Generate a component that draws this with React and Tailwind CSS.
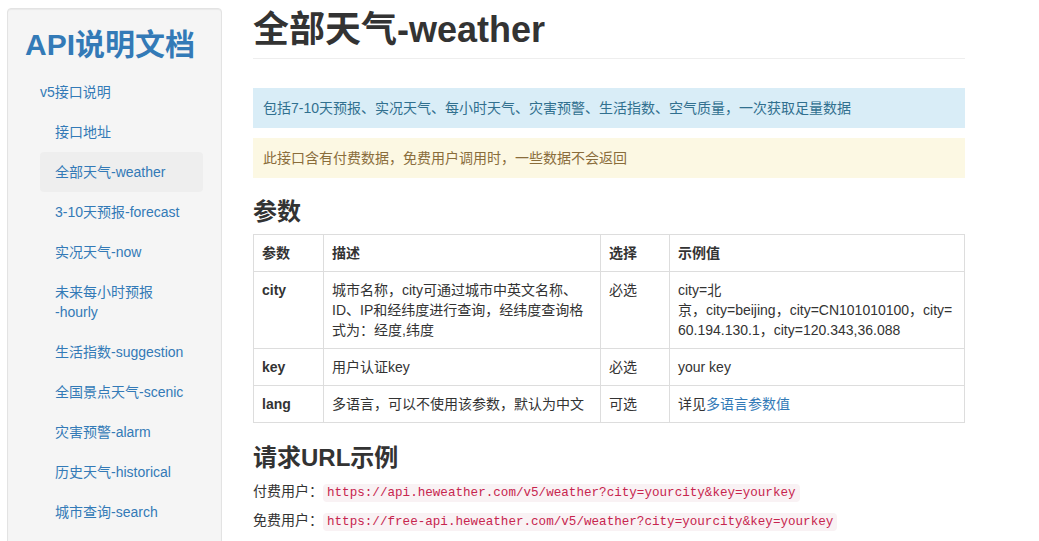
import React from "react";

const navItems = [
  { label: "接口地址" },
  { label: "全部天气-weather", active: true },
  { label: "3-10天预报-forecast" },
  { label: "实况天气-now" },
  {
    label: (
      <>
        未来每小时预报
        <br />
        -hourly
      </>
    ),
  },
  { label: "生活指数-suggestion" },
  { label: "全国景点天气-scenic" },
  { label: "灾害预警-alarm" },
  { label: "历史天气-historical" },
  { label: "城市查询-search" },
];

const sans = "font-['Liberation_Sans','Noto_Sans_CJK_SC',sans-serif]";

function Sidebar() {
  return (
    <aside className="w-[215px] shrink-0 mt-2 bg-[#f5f5f5] border border-[#e3e3e3] rounded pt-[19px] pl-[17px] pr-[18px] pb-10 shadow-[inset_0_1px_1px_rgba(0,0,0,0.05)]">
      <h1 className="text-[30px] leading-[33px] font-bold text-[#337ab7] mb-[11px]">
        API说明文档
      </h1>
      <ul>
        <li>
          <a className="block px-[15px] py-[10px] text-sm leading-5 text-[#337ab7]">
            v5接口说明
          </a>
          <ul className="pl-[15px]">
            {navItems.map((item, i) => (
              <li key={i}>
                <a
                  className={
                    "block px-[15px] py-[10px] text-sm leading-5 text-[#337ab7] rounded-sm " +
                    (item.active ? "bg-[#eeeeee]" : "")
                  }
                >
                  {item.label}
                </a>
              </li>
            ))}
          </ul>
        </li>
      </ul>
    </aside>
  );
}

function Cell({ children, bold, head }) {
  return (
    <td
      className={
        "border border-[#dddddd] px-2 py-2 align-top text-sm leading-5 " +
        (bold || head ? "font-bold" : "")
      }
    >
      {children}
    </td>
  );
}

export default function App() {
  return (
    <div className={`${sans} text-[#333333] bg-white min-h-screen flex pl-[7px]`}>
      <Sidebar />
      <main className="w-[712px] ml-[31px] pt-[10px]">
        <div className="border-b border-[#eeeeee] pb-2">
          <h1 className="text-[36px] leading-10 font-bold">全部天气-weather</h1>
        </div>

        <div className="mt-[29px] bg-[#d9edf7] text-[#31708f] text-sm leading-5 px-[10px] py-[10px]">
          包括7-10天预报、实况天气、每小时天气、灾害预警、生活指数、空气质量，一次获取足量数据
        </div>
        <div className="mt-[10px] bg-[#fcf8e3] text-[#8a6d3b] text-sm leading-5 px-[10px] py-[10px]">
          此接口含有付费数据，免费用户调用时，一些数据不会返回
        </div>

        <h2 className="mt-[21px] text-2xl leading-[26px] font-bold">参数</h2>
        <table className="mt-[9px] w-full border-collapse border border-[#dddddd]">
          <colgroup>
            <col className="w-[70px]" />
            <col className="w-[277px]" />
            <col className="w-[69px]" />
            <col />
          </colgroup>
          <thead>
            <tr>
              <Cell head>参数</Cell>
              <Cell head>描述</Cell>
              <Cell head>选择</Cell>
              <Cell head>示例值</Cell>
            </tr>
          </thead>
          <tbody>
            <tr>
              <Cell bold>city</Cell>
              <Cell>
                城市名称，city可通过城市中英文名称、
                <br />
                ID、IP和经纬度进行查询，经纬度查询格
                <br />
                式为：经度,纬度
              </Cell>
              <Cell>必选</Cell>
              <Cell>
                city=北
                <br />
                京，city=beijing，city=CN101010100，city=
                <br />
                60.194.130.1，city=120.343,36.088
              </Cell>
            </tr>
            <tr>
              <Cell bold>key</Cell>
              <Cell>用户认证key</Cell>
              <Cell>必选</Cell>
              <Cell>your key</Cell>
            </tr>
            <tr>
              <Cell bold>lang</Cell>
              <Cell>多语言，可以不使用该参数，默认为中文</Cell>
              <Cell>可选</Cell>
              <Cell>
                详见<a className="text-[#337ab7]">多语言参数值</a>
              </Cell>
            </tr>
          </tbody>
        </table>

        <h2 className="mt-[22px] text-2xl leading-[26px] font-bold">请求URL示例</h2>
        <p className="mt-[10px] text-sm leading-5">
          付费用户：
          <code className="font-['Liberation_Mono',monospace] text-[12.6px] leading-none text-[#c7254e] bg-[#f9f2f4] px-1 py-0.5 rounded">
            https://api.heweather.com/v5/weather?city=yourcity&amp;key=yourkey
          </code>
        </p>
        <p className="mt-[9px] text-sm leading-5">
          免费用户：
          <code className="font-['Liberation_Mono',monospace] text-[12.6px] leading-none text-[#c7254e] bg-[#f9f2f4] px-1 py-0.5 rounded">
            https://free-api.heweather.com/v5/weather?city=yourcity&amp;key=yourkey
          </code>
        </p>
      </main>
    </div>
  );
}
